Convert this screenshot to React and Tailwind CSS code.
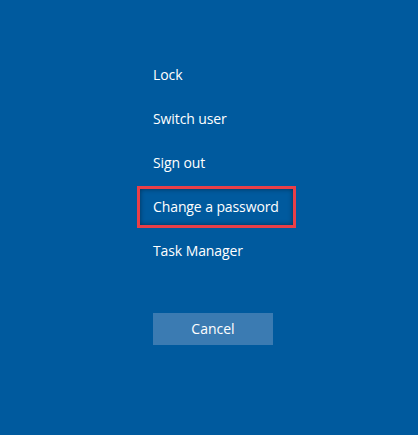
const items = ["Lock", "Switch user", "Sign out", "Change a password", "Task Manager"];

export default function App() {
  return (
    <div
      className="w-[418px] h-[435px] bg-[#005a9e] text-white pt-[53px] pl-[137px]"
      style={{ fontFamily: '"Open Sans", "Noto Sans", sans-serif' }}
    >
      <div className="flex flex-col">
        {items.map((label) => (
          <div key={label} className="h-[44px] flex items-center">
            <div
              className={
                label === "Change a password"
                  ? "w-[159px] h-[42px] flex items-center px-[13px] border-[3px] border-[#ea3f48] shadow-[inset_0_0_5px_rgba(0,0,0,0.45)]"
                  : "w-[159px] h-[42px] flex items-center px-[13px] border-[3px] border-transparent"
              }
            >
              <span className="whitespace-nowrap text-[14px] leading-none tracking-[-0.1px]">{label}</span>
            </div>
          </div>
        ))}
      </div>
      <button
        type="button"
        className="mt-[40px] ml-[16px] w-[120px] h-[32px] bg-[#3b7bb2] text-white text-[14px] leading-none"
      >
        Cancel
      </button>
    </div>
  );
}
